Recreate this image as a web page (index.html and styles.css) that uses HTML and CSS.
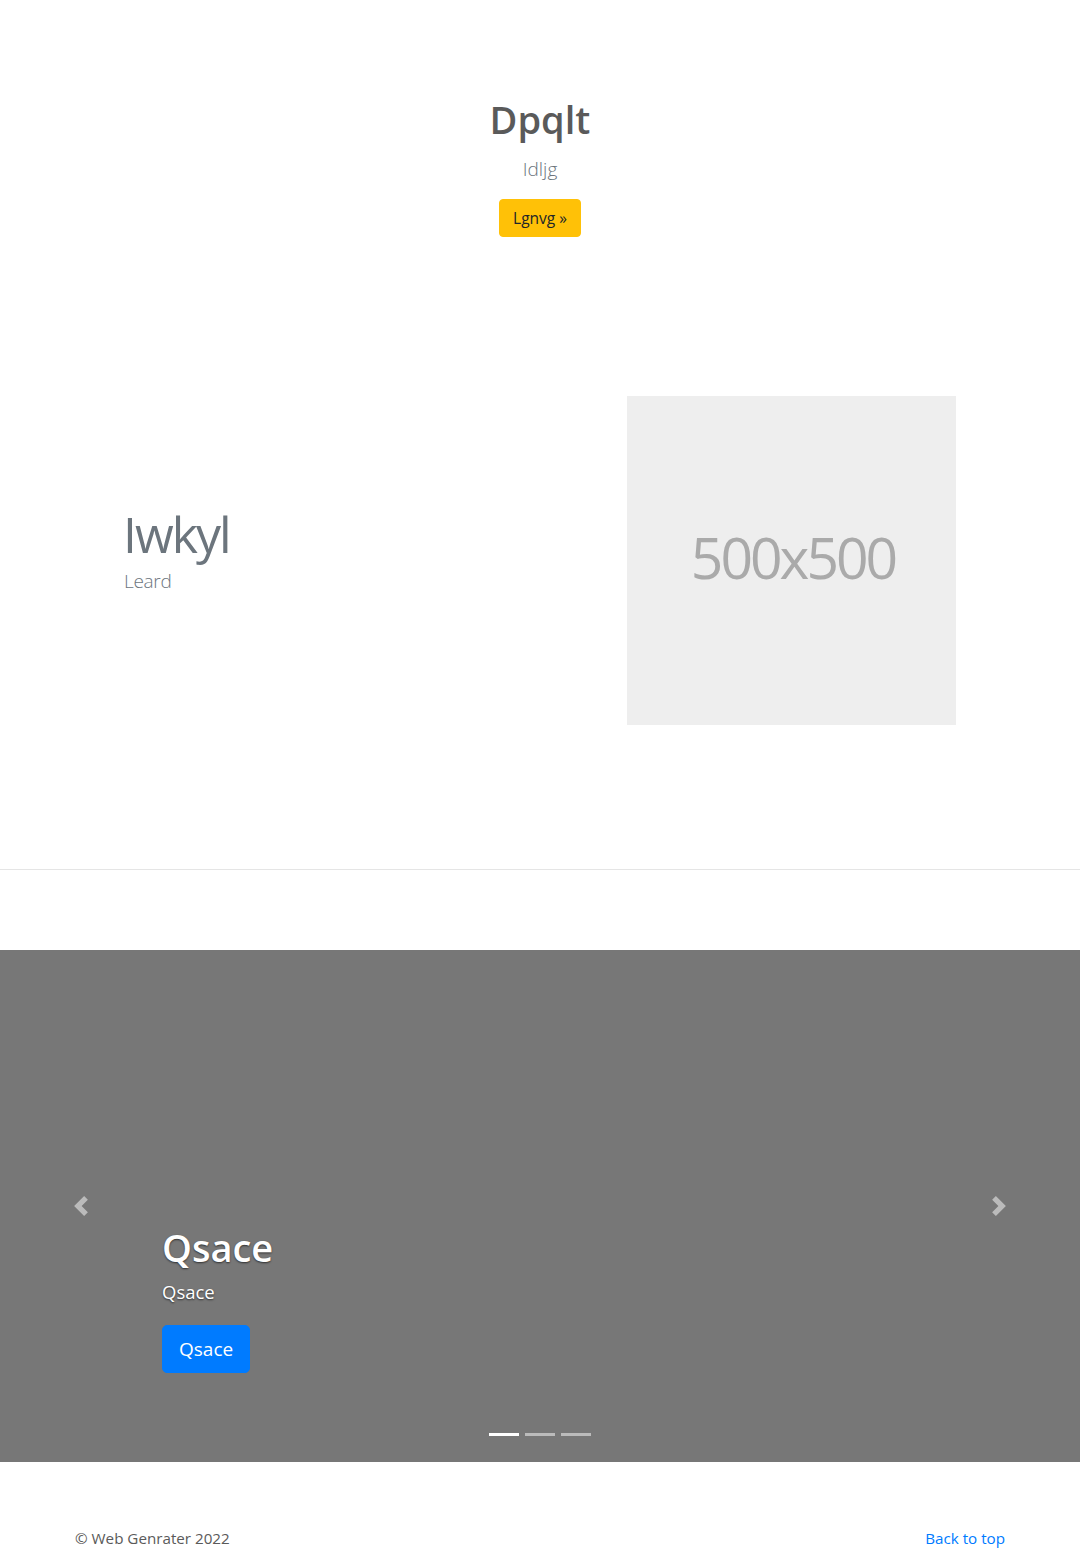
FILE: index.html
```html
<!DOCTYPE html>
<html lang="en">
<head>
<meta charset="utf-8">
<title>Dpqlt</title>
<link rel="stylesheet" href="styles.css">
</head>
<body>
<main>
  <section class="hero">
    <h1 class="hero-title">Dpqlt</h1>
    <p class="hero-lead">Idljg</p>
    <a class="btn btn-warning" href="#">Lgnvg &raquo;</a>
  </section>

  <section class="featurette">
    <div class="feat-text">
      <h2 class="feat-heading">Iwkyl</h2>
      <p class="feat-lead">Leard</p>
    </div>
    <div class="feat-img"><span class="feat-img-label">500x500</span></div>
  </section>

  <hr class="divider">

  <section class="carousel">
    <a class="carousel-control prev" href="#" aria-label="Previous">
      <svg class="chev" viewBox="0 0 8 8" width="20" height="20"><path d="M5.25 0l-4 4 4 4 1.5-1.5L4.25 4l2.5-2.5L5.25 0z" fill="#fff"/></svg>
    </a>
    <div class="carousel-caption">
      <h1 class="caption-title">Qsace</h1>
      <p class="caption-text">Qsace</p>
      <a class="btn btn-lg btn-primary" href="#">Qsace</a>
    </div>
    <a class="carousel-control next" href="#" aria-label="Next">
      <svg class="chev" viewBox="0 0 8 8" width="20" height="20"><path d="M2.75 0l-1.5 1.5L3.75 4l-2.5 2.5L2.75 8l4-4-4-4z" fill="#fff"/></svg>
    </a>
    <ol class="indicators">
      <li class="active"></li>
      <li></li>
      <li></li>
    </ol>
  </section>
</main>

<footer class="footer">
  <p class="copy">&copy; Web Genrater 2022</p>
  <a class="back-top" href="#">Back to top</a>
</footer>
</body>
</html>
```

FILE: styles.css
```css
* { box-sizing: border-box; }

html, body {
  margin: 0;
  padding: 0;
  background: #fff;
}

body {
  font-family: "Open Sans", "Noto Sans", sans-serif;
  font-size: 16px;
  line-height: 1.5;
  color: #5a5a5a;
}

a { text-decoration: none; }

.hero {
  padding-top: 97px;
  display: flex;
  flex-direction: column;
  align-items: center;
  text-align: center;
}

.hero-title {
  margin: 0 0 11px;
  font-size: 38px;
  font-weight: 600;
  line-height: 1.2;
  color: #5a5a5a;
}

.hero-lead {
  margin: 0 0 15px;
  font-size: 19px;
  font-weight: 300;
  line-height: 30px;
  color: #6c757d;
}

.btn {
  display: inline-block;
  border: 1px solid transparent;
  border-radius: 4px;
  font-size: 15.5px;
  line-height: 24px;
  padding: 6px 13px;
  font-weight: 400;
}

.btn-warning {
  background: #ffc107;
  border-color: #ffc107;
  color: #212529;
}

.btn-lg {
  font-size: 19px;
  line-height: 30px;
  padding: 8px 16px;
  border-radius: 5px;
}

.btn-primary {
  background: #007bff;
  border-color: #007bff;
  color: #fff;
}

.featurette {
  display: flex;
  align-items: center;
  margin-top: 159px;
  padding: 0 124px 0 123px;
}

.feat-text {
  flex: 1;
}

.feat-heading {
  margin: 0 0 7px;
  font-size: 50px;
  font-weight: 400;
  line-height: 1;
  letter-spacing: -2px;
  color: #6c757d;
}

.feat-lead {
  margin: 0 0 16px 1px;
  font-size: 19px;
  font-weight: 300;
  line-height: 30px;
  letter-spacing: -0.3px;
  color: #6c757d;
}

.feat-img {
  width: 329px;
  height: 329px;
  background: #eee;
  display: flex;
  align-items: center;
  justify-content: center;
}

.feat-img-label {
  font-size: 57px;
  letter-spacing: -3px;
  color: #aaa;
  line-height: 1;
  margin: 0 0 6px 3px;
}

.divider {
  margin: 144px 0 80px;
  border: 0;
  border-top: 1px solid #e5e5e5;
  height: 0;
}

.carousel {
  position: relative;
  height: 512px;
  background: #777;
  margin-bottom: 64px;
}

.carousel-control {
  position: absolute;
  top: 0;
  bottom: 0;
  width: 15%;
  display: flex;
  align-items: center;
  justify-content: center;
  opacity: 0.5;
}

.carousel-control.prev { left: 0; }
.carousel-control.next { right: 0; }

.chev { display: block; }

.carousel-caption {
  position: absolute;
  left: 15%;
  right: 15%;
  bottom: 89px;
  color: #fff;
  display: flex;
  flex-direction: column;
  align-items: flex-start;
  text-shadow: 0 1px 2px rgba(0, 0, 0, 0.6);
}

.caption-title {
  margin: 0 0 7px;
  font-size: 38px;
  font-weight: 600;
  line-height: 1.2;
}

.caption-text {
  margin: 0 0 19px;
  font-size: 18.5px;
  line-height: 1.5;
}

.carousel-caption .btn {
  text-shadow: none;
}

.indicators {
  position: absolute;
  left: 0;
  right: 0;
  bottom: 26px;
  margin: 0;
  padding: 0;
  list-style: none;
  display: flex;
  justify-content: center;
  gap: 6px;
}

.indicators li {
  width: 30px;
  height: 3px;
  background: #fff;
  opacity: 0.5;
}

.indicators li.active { opacity: 1; }

.footer {
  display: flex;
  justify-content: space-between;
  align-items: flex-start;
  padding: 0 75px;
  font-size: 15.2px;
}

.copy {
  margin: 0 0 16px;
  color: #5a5a5a;
  line-height: 24px;
}

.back-top {
  color: #007bff;
  line-height: 24px;
}
```
